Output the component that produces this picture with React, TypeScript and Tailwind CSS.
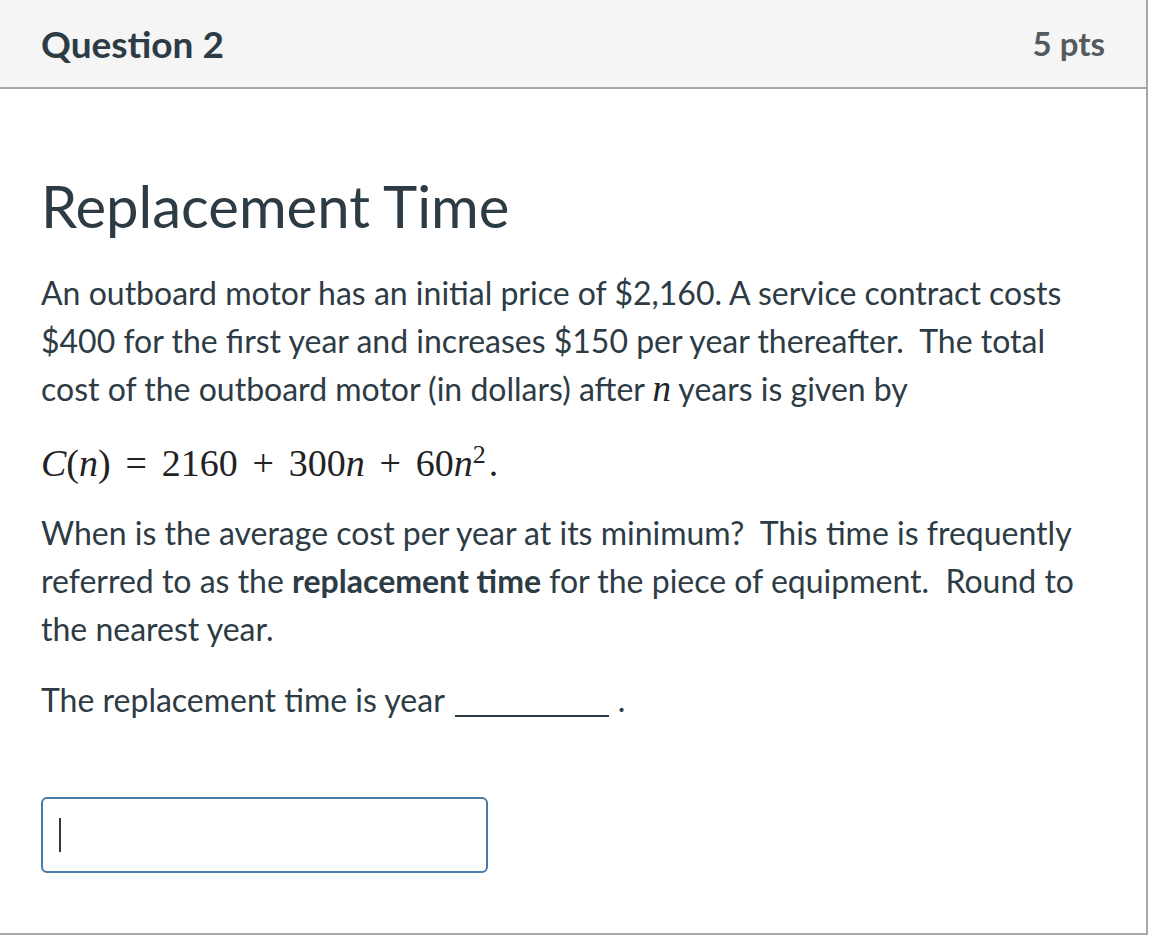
import React from "react";

const serif = { fontFamily: '"Liberation Serif", "DejaVu Serif", serif' };

function Op({ children }: { children: React.ReactNode }) {
  return <span className="inline-block w-[29px] text-center mx-[11px]">{children}</span>;
}

export default function App() {
  return (
    <div className="w-[1162px] h-[936px] bg-white" style={{ fontFamily: 'Lato, "Noto Sans", sans-serif' }}>
      <div className="w-[1148px] h-[935px] border-r-2 border-b-2 border-[#a8a8a8] flex flex-col">
        <div className="h-[89px] shrink-0 bg-[#f5f5f5] border-b-2 border-[#a8a8a8] flex items-center justify-between pl-[41px] pr-[41px]">
          <div className="text-[37px] font-bold text-[#2d3b45]">Question 2</div>
          <div className="text-[33px] font-bold text-[#555a5e]">5 pts</div>
        </div>
        <div className="px-[41px] text-[#2d3b45]">
          <h2 className="text-[58px] leading-[70px] mt-[82px] font-normal">Replacement Time</h2>
          <p className="text-[32px] leading-[48px] mt-[28px]">
            An outboard motor has an initial price of $2,160. A service contract costs $400 for the first year and increases $150 per year thereafter.&nbsp; The total cost of the outboard motor (in dollars) after{" "}
            <span style={serif} className="italic text-[37px] leading-none text-[#222]">n</span> years is given by
          </p>
          <p className="text-[38px] leading-[48px] mt-[26px] text-[#222] whitespace-nowrap" style={serif}>
            <span className="italic">C</span>(<span className="italic">n</span>)<Op>=</Op>2160<Op>+</Op>300<span className="italic">n</span><Op>+</Op>60<span className="italic">n</span>
            <sup className="text-[26px]">2</sup>
            <span className="ml-[3px]">.</span>
          </p>
          <p className="text-[32px] leading-[48px] mt-[22px]">
            When is the average cost per year at its minimum?&nbsp; This time is frequently referred to as the <b>replacement time</b> for the piece of equipment.&nbsp; Round to the nearest year.
          </p>
          <p className="text-[32px] leading-[48px] mt-[23px] whitespace-nowrap">
            The replacement time is year
            <span className="inline-block w-[154px] ml-[10px] border-b-2 border-[#2d3b45] align-baseline translate-y-[5px]"></span>
            <span className="ml-[9px]">.</span>
          </p>
          <div className="mt-[73px] w-[447px] h-[76px] border-2 border-[#4a7ba7] rounded-[6px] flex items-center pl-[16px]">
            <div className="w-[2px] h-[34px] bg-[#2d3b45]"></div>
          </div>
        </div>
      </div>
    </div>
  );
}
